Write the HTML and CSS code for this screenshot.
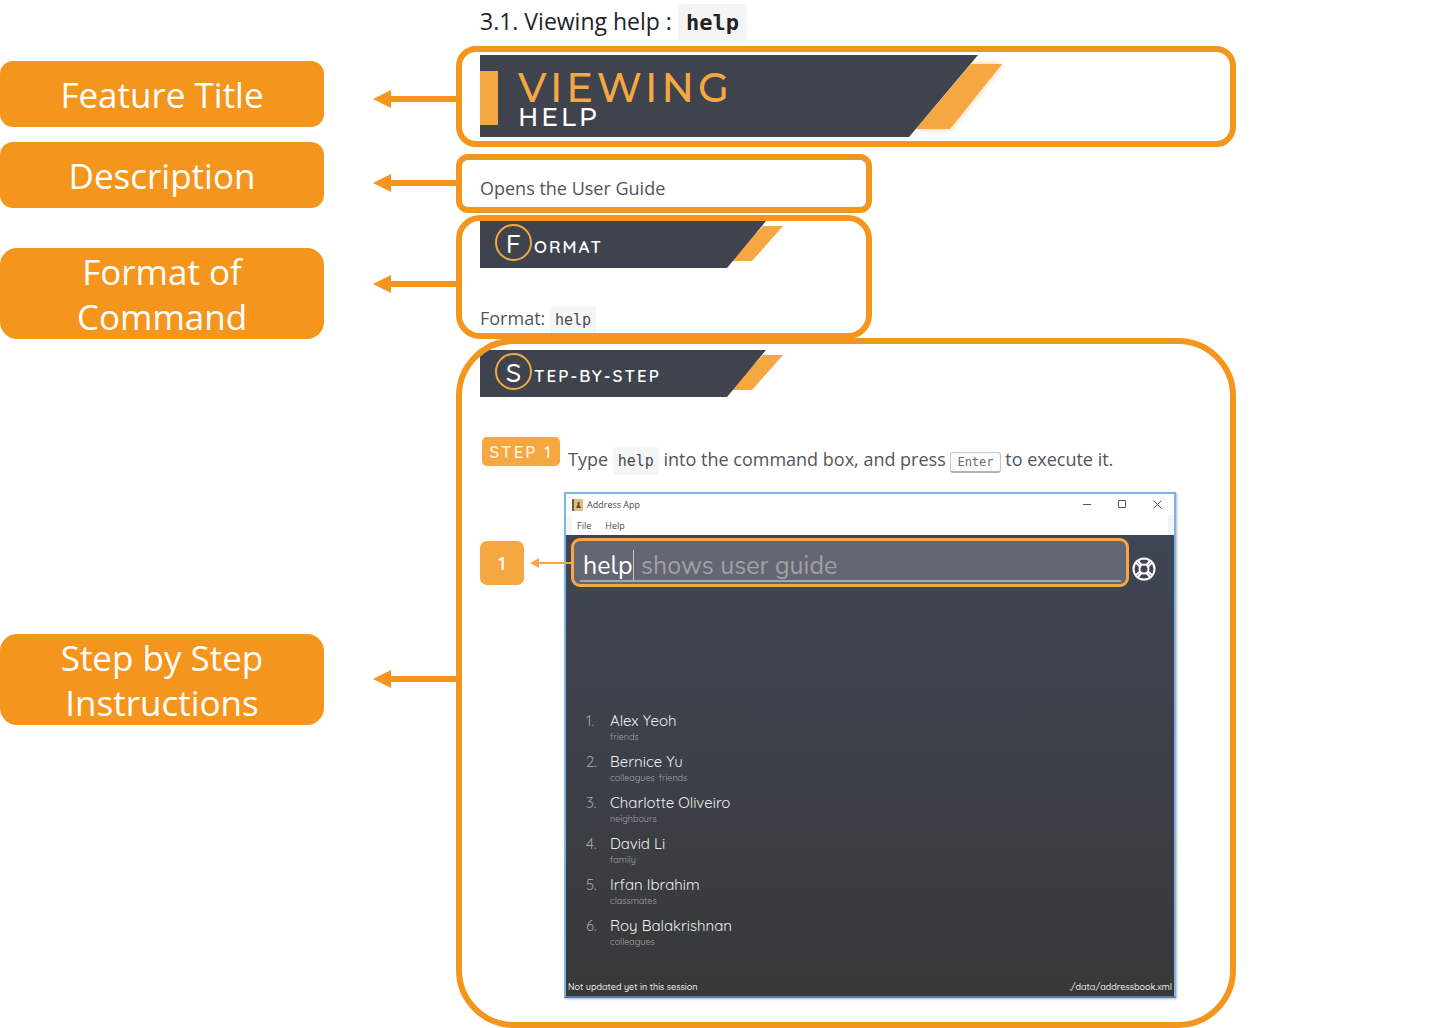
FILE: index.html
```html
<!DOCTYPE html>
<html lang="en">
<head>
<meta charset="utf-8">
<title>Viewing help</title>
<link rel="stylesheet" href="styles.css">
</head>
<body>
<div class="guide">
  <aside class="labels">
    <div class="label label-title">Feature Title</div>
    <div class="label label-description">Description</div>
    <div class="label label-tall label-format">Format of<br>Command</div>
    <div class="label label-tall label-steps">Step by Step<br>Instructions</div>
  </aside>
  <main class="content">
    <h1 class="heading">3.1. Viewing help : <code class="code code-heading">help</code></h1>

    <section class="callout callout-title">
      <svg class="arrow" viewBox="0 0 83 18" aria-hidden="true"><path d="M0 9 18 0V6H83V12H18V18Z"/></svg>
      <div class="frame">
        <div class="banner">
          <svg class="banner-shape" width="540" height="88" aria-hidden="true">
            <path class="glow" d="M491 9H522L470 74H436Z"/>
            <path class="amber" d="M491 9H522L470 74H436Z"/>
            <path class="dark" d="M0 0H498L429 82H0Z"/>
            <path class="amber" d="M0 16H18V70H0Z"/>
          </svg>
          <h2 class="banner-text"><span class="banner-main">VIEWING</span><span class="banner-sub">HELP</span></h2>
        </div>
      </div>
    </section>

    <section class="callout callout-description">
      <svg class="arrow" viewBox="0 0 83 18" aria-hidden="true"><path d="M0 9 18 0V6H83V12H18V18Z"/></svg>
      <div class="frame frame-short"><p class="text">Opens the User Guide</p></div>
    </section>

    <section class="callout callout-format">
      <svg class="arrow" viewBox="0 0 83 18" aria-hidden="true"><path d="M0 9 18 0V6H83V12H18V18Z"/></svg>
      <div class="frame frame-short">
        <div class="ribbon">
          <svg class="ribbon-shape" width="304" height="47" aria-hidden="true"><path class="amber" d="M283 5H303L272 40H250Z"/><path class="dark" d="M0 0H286L247 47H0Z"/></svg>
          <h3 class="ribbon-text"><span class="initial">F</span><span class="rest">ORMAT</span></h3>
        </div>
        <p class="text">Format: <code class="code">help</code></p>
      </div>
    </section>

    <section class="callout callout-steps">
      <svg class="arrow" viewBox="0 0 83 18" aria-hidden="true"><path d="M0 9 18 0V6H83V12H18V18Z"/></svg>
      <div class="frame">
        <div class="ribbon">
          <svg class="ribbon-shape" width="304" height="47" aria-hidden="true"><path class="amber" d="M283 5H303L272 40H250Z"/><path class="dark" d="M0 0H286L247 47H0Z"/></svg>
          <h3 class="ribbon-text"><span class="initial">S</span><span class="rest">TEP-BY-STEP</span></h3>
        </div>
        <div class="step">
          <span class="step-badge">STEP 1</span>
          <p class="text">Type <code class="code">help</code> into the command box, and press <kbd class="key">Enter</kbd> to execute it.</p>
        </div>
        <div class="figure">
          <span class="marker">1</span>
          <div class="window">
            <div class="titlebar">
              <svg class="app-icon" width="11" height="12" viewBox="0 0 11 12" aria-hidden="true"><path fill="#e0bd7c" d="M0 0H11V12H0Z"/><path fill="#6d5a43" d="M0 0H2V12H0Z"/><path fill="#5b4a36" d="M5.500 3H7.500V6L9 9H4L5.500 6Z"/></svg>
              <span class="app-name">Address App</span>
              <div class="controls">
                <button class="control" aria-label="Minimize"><svg width="9" height="9"><path d="M0 4.500H8"/></svg></button>
                <button class="control" aria-label="Maximize"><svg width="9" height="9"><path d="M.5 .5H7.500V7.500H.5Z"/></svg></button>
                <button class="control" aria-label="Close"><svg width="9" height="9"><path d="M.5 .5 8.500 8.500M8.500 .5 .5 8.500"/></svg></button>
              </div>
            </div>
            <div class="menubar"><button class="menu">File</button><button class="menu">Help</button></div>
            <div class="app">
              <div class="command-row">
                <div class="command">
                  <svg class="pointer" width="41" height="10" viewBox="0 0 41 10" aria-hidden="true"><path d="M0 5 9 0V4H41V6H9V10Z"/></svg>
                  <div class="command-line">
                    <input class="command-input" aria-label="Command" value="help">
                    <span class="command-hint">shows user guide</span>
                  </div>
                </div>
                <button class="help-button" aria-label="Help">
                  <svg width="24" height="24" viewBox="0 0 24 24"><circle cx="12" cy="12" r="10.500"/><circle cx="12" cy="12" r="4.500"/><path d="M4 6 8 9.500M6 4 9.500 8M20 6 16 9.500M18 4 14.500 8M4 18 8 14.500M6 20 9.500 16M20 18 16 14.500M18 20 14.500 16"/></svg>
                </button>
              </div>
              <ol class="people">
                <li class="person"><span class="number">1.</span><div><div class="name">Alex Yeoh</div><div class="tags"><span>friends</span></div></div></li>
                <li class="person"><span class="number">2.</span><div><div class="name">Bernice Yu</div><div class="tags"><span>colleagues</span><span>friends</span></div></div></li>
                <li class="person"><span class="number">3.</span><div><div class="name">Charlotte Oliveiro</div><div class="tags"><span>neighbours</span></div></div></li>
                <li class="person"><span class="number">4.</span><div><div class="name">David Li</div><div class="tags"><span>family</span></div></div></li>
                <li class="person"><span class="number">5.</span><div><div class="name">Irfan Ibrahim</div><div class="tags"><span>classmates</span></div></div></li>
                <li class="person"><span class="number">6.</span><div><div class="name">Roy Balakrishnan</div><div class="tags"><span>colleagues</span></div></div></li>
              </ol>
              <div class="statusbar"><span>Not updated yet in this session</span><span>./data/addressbook.xml</span></div>
            </div>
          </div>
        </div>
      </div>
    </section>
  </main>
</div>
</body>
</html>
```
FILE: styles.css
```css
* { box-sizing: border-box; }
body { margin: 0; background: #fff; color: #51565a; font-family: "Open Sans", "Noto Sans", sans-serif; font-size: 18px; }
h1, h2, h3, p, ol { margin: 0; padding: 0; font-weight: 400; }
button { border: 0; padding: 0; background: none; font: inherit; color: inherit; }
svg { display: block; }

.guide { display: flex; gap: 49px; }
.labels { flex: 0 1 324px; display: flex; flex-direction: column; padding-top: 61px; }
.label { display: flex; align-items: center; justify-content: center; min-height: 66px; border-radius: 13px; background: #f4961d; color: #fff; font-size: 35px; line-height: 45px; text-align: center; }
.label-tall { min-height: 91px; border-radius: 17px; }
.label-description { margin-top: 15px; }
.label-format { margin-top: 40px; }
.label-steps { margin-top: 295px; }

.content { flex: 0 1 863px; }
.heading { height: 46px; padding-left: 107px; color: #1f2326; font-size: 23px; font-weight: 500; line-height: 42px; white-space: nowrap; }
.callout { display: flex; align-items: flex-start; }
.arrow { flex: 0 0 83px; height: 18px; fill: #f4961d; }
.frame { position: relative; flex: 1; padding: 6px 24px; }
.frame::after { content: ""; position: absolute; inset: 0; border: 6px solid #f4961d; border-radius: 20px; pointer-events: none; }
.frame-short { max-width: 416px; }

.callout-title .arrow { margin-top: 44px; }
.callout-title .frame { min-height: 101px; padding-top: 9px; }
.callout-description { margin-top: 7px; }
.callout-description .arrow { margin-top: 20px; }
.callout-description .frame { min-height: 59px; padding-top: 20px; }
.callout-description .frame::after { border-radius: 12px; }
.callout-format { margin-top: 2px; }
.callout-format .arrow { margin-top: 60px; }
.callout-format .frame { min-height: 124px; }
.callout-format .frame::after { border-radius: 24px; }
.callout-format .text { margin-top: 36px; }
.callout-steps { margin-top: -1px; }
.callout-steps .arrow { margin-top: 332px; }
.callout-steps .frame { min-height: 690px; padding-top: 12px; }
.callout-steps .frame::after { border-radius: 58px; }

.amber { fill: #f5a742; }
.dark { fill: #3f434e; }
.glow { fill: #f9c88b; filter: blur(3px); }

.banner { position: relative; height: 82px; }
.banner-shape, .ribbon-shape { position: absolute; top: 0; left: 0; }
.banner-text { position: relative; display: flex; flex-direction: column; padding: 14px 0 0 38px; font-family: Montserrat, Quicksand, Lato, sans-serif; font-weight: 500; }
.banner-main { color: #f5a742; font-size: 40px; line-height: 38px; letter-spacing: 4px; }
.banner-sub { color: #fff; font-size: 25px; line-height: 20px; letter-spacing: 3px; }

.ribbon { position: relative; height: 47px; }
.ribbon-text { position: relative; display: flex; align-items: center; gap: 2px; padding: 3px 0 0 15px; color: #fff; font-family: Quicksand, Lato, sans-serif; font-size: 17px; font-weight: 600; line-height: 20px; letter-spacing: 2px; }
.initial { display: flex; align-items: center; justify-content: center; width: 37px; height: 37px; border: 2px solid #f5a742; border-radius: 50%; font-size: 27px; font-weight: 500; letter-spacing: 0; }
.rest { padding-top: 8px; }

.text { line-height: 28px; white-space: nowrap; }
.code { padding: 5px; border-radius: 4px; background: #f5f5f5; color: #474c50; font-family: "DejaVu Sans Mono", monospace; font-size: 15px; line-height: 1; }
.code-heading { padding: 6px 8px; color: #1f2326; font-size: 22px; font-weight: 700; }
.key { padding: 2px 6px; border: 1px solid #c3c7cc; border-bottom: 2px solid #aeb3b9; border-radius: 3px; background: #fafbfd; color: #6b7075; font-family: "DejaVu Sans Mono", monospace; font-size: 12px; line-height: 1; }

.step { display: flex; gap: 8px; margin-top: 40px; padding-left: 2px; }
.step .text { margin-top: 8px; }
.step-badge { width: 78px; height: 29px; border-radius: 5px; background: #f5a742; color: #fdeedb; font-family: Quicksand, Lato, sans-serif; font-size: 17px; font-weight: 600; line-height: 29px; letter-spacing: 2px; text-align: center; }

.figure { display: flex; gap: 40px; margin-top: 19px; }
.marker { flex: 0 0 44px; height: 44px; margin-top: 49px; border-radius: 7px; background: #f5a742; color: #fff; font-family: Quicksand, Lato, sans-serif; font-size: 19px; font-weight: 600; line-height: 44px; text-align: center; }
.window { flex: 0 1 612px; border: 2px solid #7db4e4; border-bottom-color: #4a7fb0; box-shadow: 1px 1px 2px #bbb; font-family: Quicksand, Lato, sans-serif; font-weight: 500; }
.titlebar { display: flex; align-items: center; height: 21px; padding: 0 12px 0 6px; background: #fff; color: #4a4a4a; font-family: "Open Sans", sans-serif; font-size: 9px; }
.app-name { margin-left: 4px; }
.controls { display: flex; gap: 26px; margin-left: auto; }
.control svg { fill: none; stroke: #555; stroke-width: 1; }
.menubar { display: flex; gap: 14px; height: 20px; padding: 0 5px; border-left: 6px solid #f5f5f5; border-right: 6px solid #f5f5f5; background: #fff; color: #4a4a4a; font-family: "Open Sans", sans-serif; font-size: 9px; }
.app { display: flex; flex-direction: column; height: 461px; background: linear-gradient(#3f4553, #3c4048 50%, #383838); }
.command-row { display: flex; align-items: center; gap: 3px; padding: 3px 0 0 5px; }
.command { position: relative; flex: 0 1 558px; height: 49px; padding: 9px 5px 0 6px; border: 3px solid #f5a742; border-radius: 9px; background: #636773; }
.pointer { position: absolute; top: 17px; left: -44px; fill: #f5a742; }
.command-line { display: flex; align-items: center; gap: 7px; height: 32px; border-bottom: 2px solid #a3a6ad; }
.command-input, .command-hint { padding-top: 2px; font-family: Nunito, Lato, sans-serif; font-size: 25px; font-weight: 400; }
.command-input { width: 54px; height: 30px; padding-left: 3px; padding-right: 0; padding-bottom: 0; border: 0; border-right: 1px solid #c8c8c8; background: none; color: #fff; outline: 0; }
.command-hint { color: #9fa0a2; }
.help-button { margin-top: 12px; }
.help-button svg { fill: none; stroke: #fff; stroke-width: 2; }
.people { display: flex; flex-direction: column; gap: 3px; margin-top: 124px; padding-left: 20px; list-style: none; }
.person { display: flex; height: 38px; color: #eee; font-size: 15px; line-height: 20px; }
.number { width: 24px; color: #a2a2a2; }
.tags { display: flex; gap: 4px; color: #a2a2a2; font-size: 9px; line-height: 12px; }
.statusbar { display: flex; justify-content: space-between; margin-top: auto; padding: 0 2px 3px; color: #eee; font-size: 9px; line-height: 12px; }
```
